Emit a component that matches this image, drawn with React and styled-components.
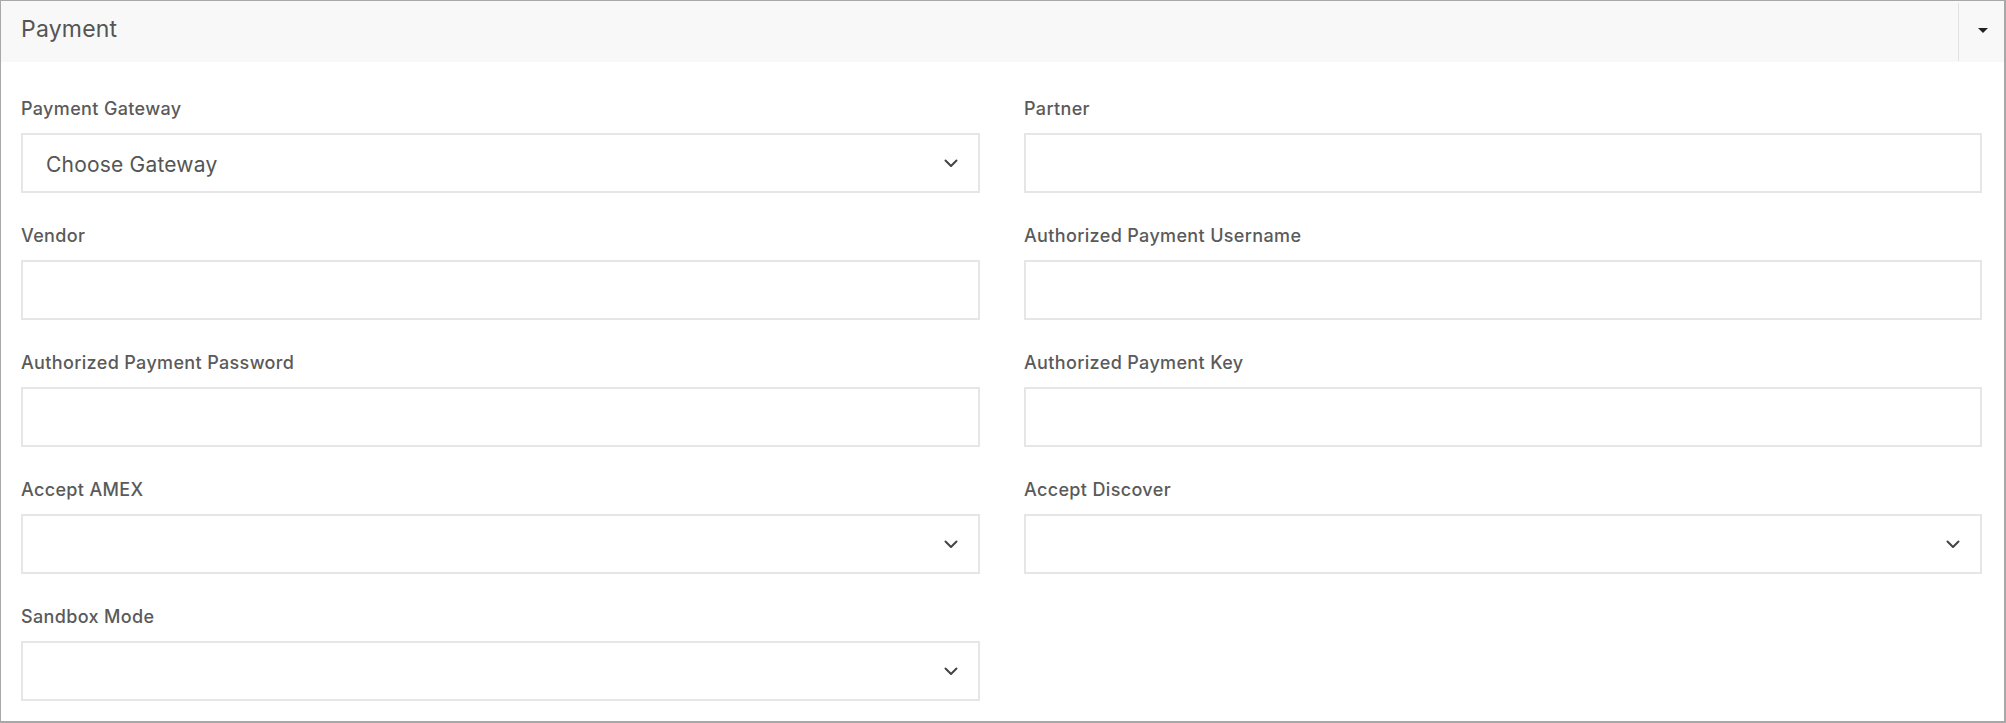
import React from 'react';
import styled, { createGlobalStyle } from 'styled-components';

const GlobalStyle = createGlobalStyle`
  html, body {
    margin: 0;
    padding: 0;
    background: #fff;
  }
  body {
    font-family: Inter, "Liberation Sans", sans-serif;
  }
`;

const Panel = styled.section`
  box-sizing: border-box;
  width: 2006px;
  height: 723px;
  border: 1px solid #a8a8a8;
  border-right-width: 2px;
  border-bottom-width: 2px;
  background: #fff;
  display: flex;
  flex-direction: column;
`;

const Header = styled.header`
  display: flex;
  align-items: stretch;
  height: 61px;
  background: #f8f8f8;
`;

const Title = styled.h2`
  flex: 1;
  margin: 0;
  padding-left: 20px;
  display: flex;
  align-items: center;
  font-size: 23px;
  font-weight: 400;
  letter-spacing: 0.2px;
  color: #555;
  padding-bottom: 6px;
`;

const Toggle = styled.button`
  width: 46px;
  border: 0;
  border-left: 1px solid #e2e2e2;
  margin: 2px 0 1px;
  background: transparent;
  display: flex;
  align-items: center;
  justify-content: center;
  padding: 0 0 3px 2px;
  cursor: pointer;
`;

const Caret = styled.span`
  width: 0;
  height: 0;
  border-left: 5px solid transparent;
  border-right: 5px solid transparent;
  border-top: 5px solid #222;
`;

const Body = styled.div`
  display: grid;
  grid-template-columns: 959px 958px;
  column-gap: 44px;
  row-gap: 31px;
  padding: 35px 0 0 20px;
  align-content: start;
`;

const Field = styled.div`
  display: flex;
  flex-direction: column;
  gap: 12px;
`;

const Label = styled.label`
  font-size: 18px;
  line-height: 24px;
  font-weight: 500;
  letter-spacing: 0.35px;
  color: #5a5a5a;
`;

const Box = styled.div`
  box-sizing: border-box;
  height: 60px;
  border: 2px solid #e6e6e6;
  background: #fff;
  display: flex;
  align-items: center;
  justify-content: space-between;
  padding: 0 20px 0 23px;
`;

const Value = styled.span`
  font-size: 21px;
  letter-spacing: 0.2px;
  color: #555;
  padding-top: 2px;
`;

function Chevron() {
  return (
    <svg width="14" height="9" viewBox="0 0 14 9" fill="none">
      <path d="M1.5 1.5 L7 7 L12.5 1.5" stroke="#444" strokeWidth="2" strokeLinecap="round" strokeLinejoin="round" />
    </svg>
  );
}

const fields = [
  { label: 'Payment Gateway', select: true, value: 'Choose Gateway' },
  { label: 'Partner' },
  { label: 'Vendor' },
  { label: 'Authorized Payment Username' },
  { label: 'Authorized Payment Password' },
  { label: 'Authorized Payment Key' },
  { label: 'Accept AMEX', select: true },
  { label: 'Accept Discover', select: true },
  { label: 'Sandbox Mode', select: true },
];

export default function App() {
  return (
    <>
      <GlobalStyle />
      <Panel>
        <Header>
          <Title>Payment</Title>
          <Toggle aria-label="Toggle">
            <Caret />
          </Toggle>
        </Header>
        <Body>
          {fields.map((f) => (
            <Field key={f.label}>
              <Label>{f.label}</Label>
              <Box>
                <Value>{f.value || ''}</Value>
                {f.select && <Chevron />}
              </Box>
            </Field>
          ))}
        </Body>
      </Panel>
    </>
  );
}
